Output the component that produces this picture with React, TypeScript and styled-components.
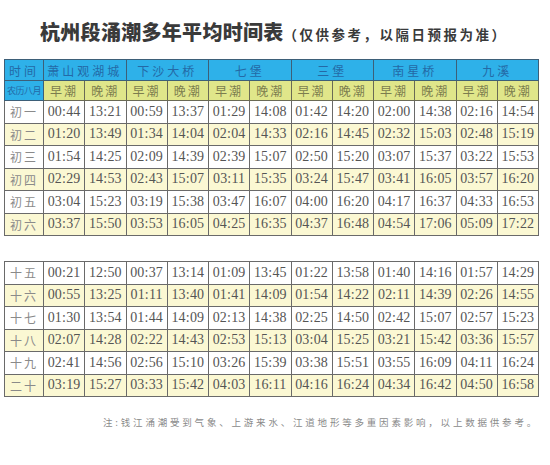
import { createGlobalStyle } from "styled-components";
import styled from "styled-components";

const GlobalStyle = createGlobalStyle`
  html, body {
    margin: 0;
    padding: 0;
    background: #ffffff;
  }
`;

const stations = ["萧山观湖城", "下沙大桥", "七堡", "三堡", "南星桥", "九溪"];

const firstHalf: [string, string[]][] = [
  ["初一", ["00:44", "13:21", "00:59", "13:37", "01:29", "14:08", "01:42", "14:20", "02:00", "14:38", "02:16", "14:54"]],
  ["初二", ["01:20", "13:49", "01:34", "14:04", "02:04", "14:33", "02:16", "14:45", "02:32", "15:03", "02:48", "15:19"]],
  ["初三", ["01:54", "14:25", "02:09", "14:39", "02:39", "15:07", "02:50", "15:20", "03:07", "15:37", "03:22", "15:53"]],
  ["初四", ["02:29", "14:53", "02:43", "15:07", "03:11", "15:35", "03:24", "15:47", "03:41", "16:05", "03:57", "16:20"]],
  ["初五", ["03:04", "15:23", "03:19", "15:38", "03:47", "16:07", "04:00", "16:20", "04:17", "16:37", "04:33", "16:53"]],
  ["初六", ["03:37", "15:50", "03:53", "16:05", "04:25", "16:35", "04:37", "16:48", "04:54", "17:06", "05:09", "17:22"]],
];

const secondHalf: [string, string[]][] = [
  ["十五", ["00:21", "12:50", "00:37", "13:14", "01:09", "13:45", "01:22", "13:58", "01:40", "14:16", "01:57", "14:29"]],
  ["十六", ["00:55", "13:25", "01:11", "13:40", "01:41", "14:09", "01:54", "14:22", "02:11", "14:39", "02:26", "14:55"]],
  ["十七", ["01:30", "13:54", "01:44", "14:09", "02:13", "14:38", "02:25", "14:50", "02:42", "15:07", "02:57", "15:23"]],
  ["十八", ["02:07", "14:28", "02:22", "14:43", "02:53", "15:13", "03:04", "15:25", "03:21", "15:42", "03:36", "15:57"]],
  ["十九", ["02:41", "14:56", "02:56", "15:10", "03:26", "15:39", "03:38", "15:51", "03:55", "16:09", "04:11", "16:24"]],
  ["二十", ["03:19", "15:27", "03:33", "15:42", "04:03", "16:11", "04:16", "16:24", "04:34", "16:42", "04:50", "16:58"]],
];

function Columns() {
  return (
    <colgroup>
      <col style={{ width: 39 }} />
      {Array.from({ length: 12 }).map((_, i) => (
        <col key={i} />
      ))}
    </colgroup>
  );
}

function Rows({ data }: { data: [string, string[]][] }) {
  return (
    <tbody>
      {data.map(([day, times], i) => (
        <Row key={day} $shaded={i % 2 === 1}>
          <DayCell>{day}</DayCell>
          {times.map((t, j) => (
            <TimeCell key={j}>{t}</TimeCell>
          ))}
        </Row>
      ))}
    </tbody>
  );
}

export default function App() {
  return (
    <Page>
      <GlobalStyle />
      <TitleBar>
        <Title>杭州段涌潮多年平均时间表</Title>
        <Subtitle>（仅供参考，以隔日预报为准）</Subtitle>
      </TitleBar>

      <Table>
        <Columns />
        <thead>
          <tr>
            <HeadCell $tall>时间</HeadCell>
            {stations.map((s) => (
              <HeadCell key={s} colSpan={2} $tall>
                {s}
              </HeadCell>
            ))}
          </tr>
          <tr>
            <HeadCell $small>农历八月</HeadCell>
            {stations.map((s) => [
              <SubCell key={s + "a"}>早潮</SubCell>,
              <SubCell key={s + "b"}>晚潮</SubCell>,
            ])}
          </tr>
        </thead>
        <Rows data={firstHalf} />
      </Table>

      <Table $gap>
        <Columns />
        <Rows data={secondHalf} />
      </Table>

      <Note>注:钱江涌潮受到气象、上游来水、江道地形等多重因素影响，以上数据供参考。</Note>
    </Page>
  );
}

const Page = styled.div`
  width: 550px;
  height: 465px;
  padding: 0 11px 0 4px;
  box-sizing: border-box;
  overflow: hidden;
  font-family: "Liberation Serif", "Noto Sans CJK SC", serif;
`;

const TitleBar = styled.div`
  display: flex;
  align-items: baseline;
  height: 59px;
  padding: 20px 0 0 36px;
  box-sizing: border-box;
  font-family: "Noto Sans CJK SC", sans-serif;
  color: #3a3a3a;
`;

const Title = styled.h1`
  margin: 0;
  font-size: 20px;
  font-weight: 900;
  letter-spacing: 0.3px;
  line-height: 24px;
`;

const Subtitle = styled.span`
  font-size: 13.5px;
  font-weight: 700;
  letter-spacing: 2.5px;
`;

const Table = styled.table<{ $gap?: boolean }>`
  width: 535px;
  table-layout: fixed;
  border-collapse: collapse;
  border: 1.5px solid #5a5a5a;
  margin-top: ${(p) => (p.$gap ? "25px" : "0")};
`;

const HeadCell = styled.th<{ $tall?: boolean; $small?: boolean }>`
  background: #2eb1e9;
  color: #2469a6;
  border: 1px solid #3d5f78;
  height: ${(p) => (p.$tall ? "20px" : "19px")};
  padding: 0;
  font-family: "Noto Sans CJK SC", sans-serif;
  font-weight: 400;
  font-size: ${(p) => (p.$small ? "9px" : "12px")};
  letter-spacing: ${(p) => (p.$small ? "-0.5px" : "3px")};
  white-space: nowrap;
  overflow: hidden;
  text-align: center;
`;

const SubCell = styled.th`
  background: #e0e68a;
  color: #7c7d4e;
  border: 1px solid #6a6a55;
  height: 19px;
  padding: 0;
  font-family: "Noto Sans CJK SC", sans-serif;
  font-weight: 400;
  font-size: 12px;
  letter-spacing: 2px;
  text-align: center;
`;

const Row = styled.tr<{ $shaded: boolean }>`
  background: ${(p) => (p.$shaded ? "#fbf8d3" : "#ffffff")};
`;

const DayCell = styled.td`
  border: 1px solid #6a6a6a;
  height: 21.5px;
  padding: 0;
  text-align: center;
  font-family: "Noto Sans CJK SC", sans-serif;
  font-size: 12px;
  letter-spacing: 2px;
  color: #8a8a8a;
`;

const TimeCell = styled.td`
  border: 1px solid #6a6a6a;
  padding: 0;
  text-align: center;
  font-family: "Liberation Serif", serif;
  font-size: 14px;
  letter-spacing: 0.2px;
  color: #555555;
`;

const Note = styled.p`
  margin: 18px 0 0;
  text-align: right;
  font-family: "Noto Sans CJK SC", sans-serif;
  font-size: 9.5px;
  letter-spacing: 2.8px;
  color: #8a8a8a;
`;
